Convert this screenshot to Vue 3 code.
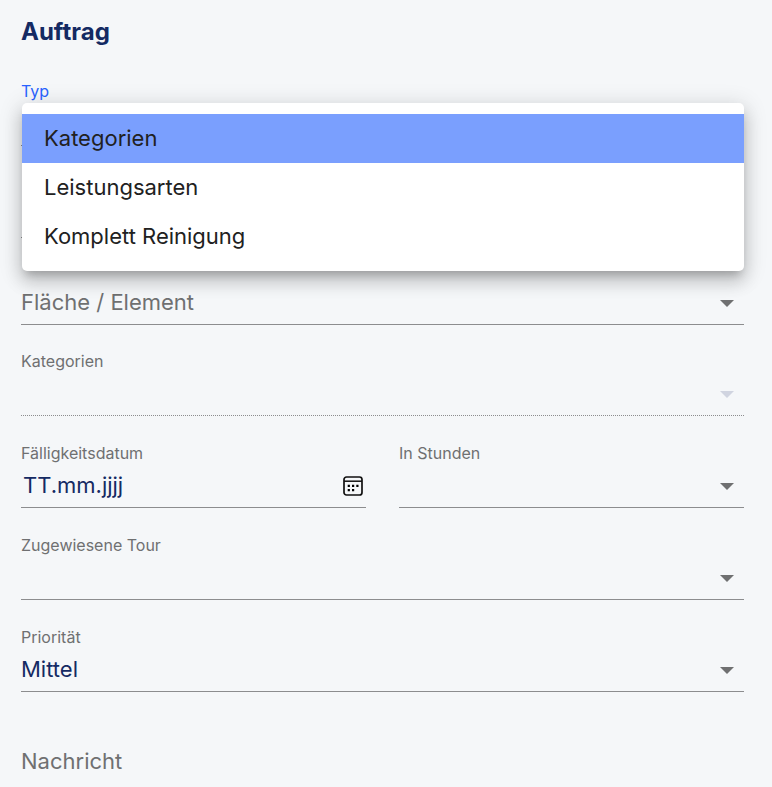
<script setup>
import { ref } from 'vue'

const types = ['Kategorien', 'Leistungsarten', 'Komplett Reinigung']
const type = ref('Kategorien')
const open = ref(true)
const priority = ref('Mittel')
const dueDate = ref('')
const message = ref('')

function choose(name) {
  type.value = name
  open.value = false
}
</script>

<template>
  <form class="order" @submit.prevent>
    <h1 class="title">Auftrag</h1>

    <div class="field">
      <label class="label label-active" for="type">Typ</label>
      <div class="control">
        <button id="type" class="input" type="button" aria-haspopup="listbox" :aria-expanded="open" @click="open = !open">{{ open ? '' : type }}</button>
        <svg class="arrow" viewBox="0 0 14 7" aria-hidden="true"><path d="M0 0h14L7 7z" /></svg>
        <div v-if="open" class="panel" role="listbox" aria-label="Typ">
          <button
            v-for="name in types"
            :key="name"
            type="button"
            role="option"
            class="option"
            :class="{ selected: name === type }"
            :aria-selected="name === type"
            @click="choose(name)"
          >{{ name }}</button>
        </div>
      </div>
    </div>

    <div class="field object">
      <div class="control">
        <select class="input" aria-label="Objekt"><option></option></select>
        <svg class="arrow" viewBox="0 0 14 7" aria-hidden="true"><path d="M0 0h14L7 7z" /></svg>
      </div>
    </div>

    <div class="field unlabelled">
      <div class="control">
        <select class="input empty" aria-label="Fläche / Element"><option>Fläche / Element</option></select>
        <svg class="arrow" viewBox="0 0 14 7" aria-hidden="true"><path d="M0 0h14L7 7z" /></svg>
      </div>
    </div>

    <div class="field disabled">
      <label class="label" for="categories">Kategorien</label>
      <div class="control">
        <select id="categories" class="input" disabled><option></option></select>
        <svg class="arrow" viewBox="0 0 14 7" aria-hidden="true"><path d="M0 0h14L7 7z" /></svg>
      </div>
    </div>

    <div class="row">
      <div class="field">
        <label class="label" for="due">Fälligkeitsdatum</label>
        <div class="control">
          <input id="due" v-model="dueDate" class="input date" type="text" placeholder="TT.mm.jjjj" />
          <button class="calendar" type="button" aria-label="Kalender öffnen">
            <svg viewBox="0 0 20 20" aria-hidden="true">
              <rect x="1" y="1" width="18" height="18" rx="2.5" fill="none" stroke="#111" stroke-width="1.7" />
              <path d="M1 5.2h18" stroke="#111" stroke-width="1.5" />
              <path d="M4.7 8.8h2.2v2.2H4.7zM9 8.8h2.2v2.2H9zM13.3 8.8h2.2v2.2h-2.2zM4.7 13h2.2v2.2H4.7zM9 13h2.2v2.2H9z" fill="#000" />
            </svg>
          </button>
        </div>
      </div>
      <div class="field">
        <label class="label" for="hours">In Stunden</label>
        <div class="control">
          <select id="hours" class="input"><option></option></select>
          <svg class="arrow" viewBox="0 0 14 7" aria-hidden="true"><path d="M0 0h14L7 7z" /></svg>
        </div>
      </div>
    </div>

    <div class="field">
      <label class="label" for="tour">Zugewiesene Tour</label>
      <div class="control">
        <select id="tour" class="input"><option></option></select>
        <svg class="arrow" viewBox="0 0 14 7" aria-hidden="true"><path d="M0 0h14L7 7z" /></svg>
      </div>
    </div>

    <div class="field">
      <label class="label" for="priority">Priorität</label>
      <div class="control">
        <select id="priority" v-model="priority" class="input"><option>Mittel</option></select>
        <svg class="arrow" viewBox="0 0 14 7" aria-hidden="true"><path d="M0 0h14L7 7z" /></svg>
      </div>
    </div>

    <textarea v-model="message" class="message" rows="1" placeholder="Nachricht" aria-label="Nachricht"></textarea>
  </form>
</template>

<style>
body {
  background: #f5f7f9;
}
</style>

<style scoped>
.order,
.order * {
  box-sizing: border-box;
}

.order {
  padding: 14px 28px 0 21px;
  color: #142a63;
  font-family: Inter, "Liberation Sans", sans-serif;
  font-size: 22px;
}

.title {
  margin: 0 0 4px;
  font-size: 24px;
  line-height: 36px;
  font-weight: 700;
}

.field {
  padding-top: 27px;
}

.object {
  padding-top: 47px;
}

.unlabelled {
  padding-top: 42px;
}

.disabled {
  padding-top: 26px;
}

.row {
  display: grid;
  grid-template-columns: repeat(2, minmax(0, 1fr));
  gap: 33px;
}

.label {
  display: block;
  color: #6f7071;
  font-size: 16px;
  line-height: 20px;
}

.label-active {
  color: #2962ff;
}

.control {
  position: relative;
  display: flex;
  align-items: center;
  height: 45px;
  border-bottom: 1px solid #8c8d8f;
}

.disabled .control {
  border-bottom-style: dotted;
}

.input,
.message {
  flex: 1;
  min-width: 0;
  height: 44px;
  margin: 0;
  padding: 0;
  border: 0;
  border-radius: 0;
  outline: 0;
  background: transparent;
  color: inherit;
  font: inherit;
  text-align: left;
  appearance: none;
}

.empty {
  color: #6f7071;
}

.date {
  padding-left: 2px;
}

.date::placeholder {
  color: #142a63;
  opacity: 1;
}

.arrow {
  flex: none;
  width: 14px;
  height: 7px;
  margin: 2px 10px 0 0;
  fill: #6f7071;
  pointer-events: none;
}

.disabled .arrow {
  fill: #d0d4e0;
}

.calendar {
  flex: none;
  display: flex;
  margin: 2px 3px 0 0;
  padding: 0;
  border: 0;
  background: none;
}

.calendar svg {
  width: 20px;
  height: 20px;
}

.panel {
  position: absolute;
  z-index: 1;
  top: 2px;
  left: 1px;
  right: 0;
  padding: 11px 0 10px;
  border-radius: 5px;
  background: #fff;
  box-shadow: 0 7px 9px -4px rgba(0, 0, 0, 0.2), 0 11px 17px 1px rgba(0, 0, 0, 0.14), 0 4px 22px 3px rgba(0, 0, 0, 0.12);
}

.option {
  display: block;
  width: 100%;
  height: 49px;
  padding: 0 22px 2px;
  border: 0;
  background: none;
  color: #212121;
  font: inherit;
  text-align: left;
}

.selected {
  background: #7a9ffe;
}

.message {
  display: block;
  width: 100%;
  margin-top: 47px;
  line-height: 44px;
  resize: none;
  overflow: hidden;
}

.message::placeholder {
  color: #6f7071;
  opacity: 1;
}
</style>
